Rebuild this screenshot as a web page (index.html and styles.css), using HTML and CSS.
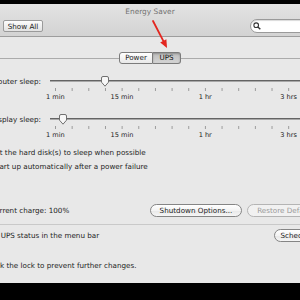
FILE: index.html
```html
<!DOCTYPE html>
<html lang="en">
<head>
<meta charset="UTF-8">
<title>Energy Saver</title>
<link rel="stylesheet" href="styles.css">
</head>
<body>

<div class="screen-top"></div>

<div class="window">
    <header class="toolbar">
        <div class="title">Energy Saver</div>
        <div class="toolbar-row">
            <button class="btn-square">Show All</button>
            <div class="search">
                <svg width="8" height="8" viewBox="0 0 8 8">
                    <circle cx="3.2" cy="3.2" r="2.3" fill="none" stroke="#333" stroke-width="1.1"/>
                    <line x1="4.9" y1="4.9" x2="7.3" y2="7.3" stroke="#333" stroke-width="1.4"/>
                </svg>
            </div>
        </div>
    </header>

    <main class="pane">
        <div class="tabs">
            <span class="seg first">Power</span>
            <span class="seg last on">UPS</span>
        </div>

        <div class="slider-row">
            <div class="slider-label"><span>Computer sleep:</span></div>
            <div class="slider">
                <div class="slider-top">
                    <div class="track"></div>
                    <svg class="thumb" style="left: 53px" width="10" height="11" viewBox="0 0 10 11">
                        <path d="M1.5 2 Q1.5 0.5 3 0.5 H7 Q8.5 0.5 8.5 2 V6.2 L5 10.2 L1.5 6.2 Z" fill="#f7f7f7" stroke="#707070"/>
                    </svg>
                </div>
                <div class="ticks"></div>
                <div class="scale">
                    <span class="c1">1 min</span>
                    <span class="c5">15 min</span>
                    <span class="c10">1 hr</span>
                    <span class="c15">3 hrs</span>
                </div>
            </div>
        </div>

        <div class="slider-row second">
            <div class="slider-label"><span>Display sleep:</span></div>
            <div class="slider">
                <div class="slider-top">
                    <div class="track"></div>
                    <svg class="thumb" style="left: 11px" width="10" height="11" viewBox="0 0 10 11">
                        <path d="M1.5 2 Q1.5 0.5 3 0.5 H7 Q8.5 0.5 8.5 2 V6.2 L5 10.2 L1.5 6.2 Z" fill="#f7f7f7" stroke="#707070"/>
                    </svg>
                </div>
                <div class="ticks"></div>
                <div class="scale">
                    <span class="c1">1 min</span>
                    <span class="c5">15 min</span>
                    <span class="c10">1 hr</span>
                    <span class="c15">3 hrs</span>
                </div>
            </div>
        </div>

        <div class="checks">
            <div class="check"><span class="cut-put">Put the hard disk(s) to sleep when possible</span></div>
            <div class="check"><span class="cut-start">Start up automatically after a power failure</span></div>
        </div>

        <div class="charge-row">
            <span class="cut-current">Current charge: 100%</span>
            <div class="buttons">
                <button class="btn shutdown">Shutdown Options...</button>
                <button class="btn restore" disabled>Restore Defaults</button>
            </div>
        </div>

        <div class="sep"></div>

        <div class="ups-row">
            <span class="cut-show">Show UPS status in the menu bar</span>
            <button class="btn schedule">Schedule...</button>
        </div>

        <div class="lock-row">
            <span class="cut-click">Click the lock to prevent further changes.</span>
        </div>
    </main>
</div>

<!-- flecha roja sobre la pestaña UPS -->
<svg class="arrow" width="24" height="34" viewBox="0 0 24 34">
    <line x1="5" y1="4" x2="15.3" y2="23.9" stroke="#e3261f" stroke-width="1.8" stroke-linecap="round"/>
    <polygon points="19,31 12.2,25.5 18.4,22.3" fill="#e3261f"/>
</svg>

</body>
</html>
```

FILE: styles.css
```css
body {
    margin: 0;
    width: 300px;
    height: 300px;
    overflow: hidden;
    background: #000;
    font-family: "DejaVu Sans", "Liberation Sans", sans-serif;
    font-size: 7.2px;
    color: #1c1c1c;
}

.screen-top {
    height: 4px;
    background: #000;
}

.window {
    height: 279px;
    background: #e8e8e8;
    display: flex;
    flex-direction: column;
}

/* barra de herramientas */
.toolbar {
    height: 28px;
    padding: 4px 0 0 0;
    background: linear-gradient(#e3e3e3, #d3d3d3);
    border-bottom: 1px solid #9d9d9d;
}

.title {
    height: 8px;
    line-height: 8px;
    text-align: center;
    color: #727272;
    font-size: 7.4px;
}

.toolbar-row {
    display: flex;
    align-items: center;
    margin-top: 3px;
    padding-left: 3px;
}

.btn-square {
    width: 40px;
    height: 12px;
    padding: 0;
    font: inherit;
    color: #222;
    border: 1px solid #9a9a9a;
    border-radius: 2px;
    background: linear-gradient(#fdfdfd, #e2e2e2);
}

.search {
    margin-left: auto;
    margin-right: -20px;
    width: 66px;
    height: 12px;
    background: #fff;
    border: 1px solid #9a9a9a;
    border-radius: 7px 0 0 7px;
    display: flex;
    align-items: center;
    padding-left: 2px;
    box-shadow: inset 0 1px 1px rgba(0, 0, 0, 0.15);
}

/* contenido */
.pane {
    width: 327px;
}

.tabs {
    margin-top: 15px;
    display: flex;
    justify-content: center;
    padding-right: 27px;
    background: linear-gradient(#ababab, #ababab) 0 6px / 100% 1px no-repeat;
}

.seg {
    height: 10px;
    line-height: 10px;
    text-align: center;
    border: 1px solid #7b7b7b;
    background: linear-gradient(#ffffff, #e8e8e8);
    color: #222;
}

.seg.first {
    width: 32px;
    border-radius: 3px 0 0 3px;
}

.seg.last {
    width: 27px;
    border-left: none;
    border-radius: 0 3px 3px 0;
}

.seg.on {
    background: linear-gradient(#bdbdbd, #d4d4d4);
    box-shadow: inset 0 1px 2px rgba(0, 0, 0, 0.25);
    color: #111;
}

.slider-row {
    display: flex;
    margin-top: 12px;
}

.slider-row.second {
    margin-top: 13px;
}

.slider-label {
    width: 41px;
    flex-shrink: 0;
    height: 11px;
    line-height: 11px;
    display: flex;
    justify-content: flex-end;
    white-space: nowrap;
}

.slider {
    width: 270px;
    margin-left: 6px;
}

.slider-top {
    position: relative;
    height: 11px;
}

.track {
    margin: 0 0 0 3px;
    position: relative;
    top: 4px;
    height: 1px;
    border-top: 1px solid #646464;
    background: #a8a8a8;
}

.thumb {
    position: absolute;
    top: 0;
}

.ticks {
    margin-top: 1px;
    height: 3px;
    background-image: linear-gradient(to right, #9a9a9a 1px, transparent 1px);
    background-size: 16.667px 100%;
    background-position: 8px 0;
    background-repeat: repeat-x;
}

.scale {
    margin-top: 2px;
    display: grid;
    grid-template-columns: repeat(16, 16.667px);
    height: 8px;
    line-height: 8px;
    font-size: 6.6px;
}

.scale span {
    display: flex;
    justify-content: center;
    white-space: nowrap;
}

.scale .c1 { grid-column: 1; }
.scale .c5 { grid-column: 5; }
.scale .c10 { grid-column: 10; }
.scale .c15 { grid-column: 15; }

.checks {
    margin-top: 9px;
    display: flex;
    flex-direction: column;
    gap: 5px;
}

.check {
    height: 9px;
    line-height: 9px;
    white-space: nowrap;
}

.cut-put { margin-left: -9px; }
.cut-start { margin-left: -8px; }
.cut-current { margin-left: -10px; }
.cut-show { margin-left: -21px; }
.cut-click { margin-left: -13px; }

.charge-row {
    margin-top: 33px;
    display: flex;
    align-items: center;
    height: 13px;
    white-space: nowrap;
}

.buttons {
    margin-left: auto;
    display: flex;
    gap: 5px;
}

.btn {
    height: 13px;
    padding: 0;
    font: inherit;
    color: #1c1c1c;
    border: 1px solid #858585;
    border-radius: 7px;
    background: linear-gradient(#ffffff, #f3f3f3 50%, #e7e7e7 51%, #f6f6f6);
    white-space: nowrap;
}

.shutdown { width: 92px; }

.restore {
    width: 80px;
    color: #9a9a9a;
    border-color: #b4b4b4;
    background: #f1f1f1;
}

.sep {
    margin-top: 7px;
    height: 1px;
    background: #c9c9c9;
}

.ups-row {
    margin-top: 4px;
    display: flex;
    align-items: center;
    height: 13px;
    white-space: nowrap;
}

.schedule {
    margin-left: auto;
    width: 53px;
}

.lock-row {
    margin-top: 19px;
    height: 9px;
    line-height: 9px;
    white-space: nowrap;
}

.arrow {
    position: absolute;
    top: 17px;
    left: 148px;
}
```
